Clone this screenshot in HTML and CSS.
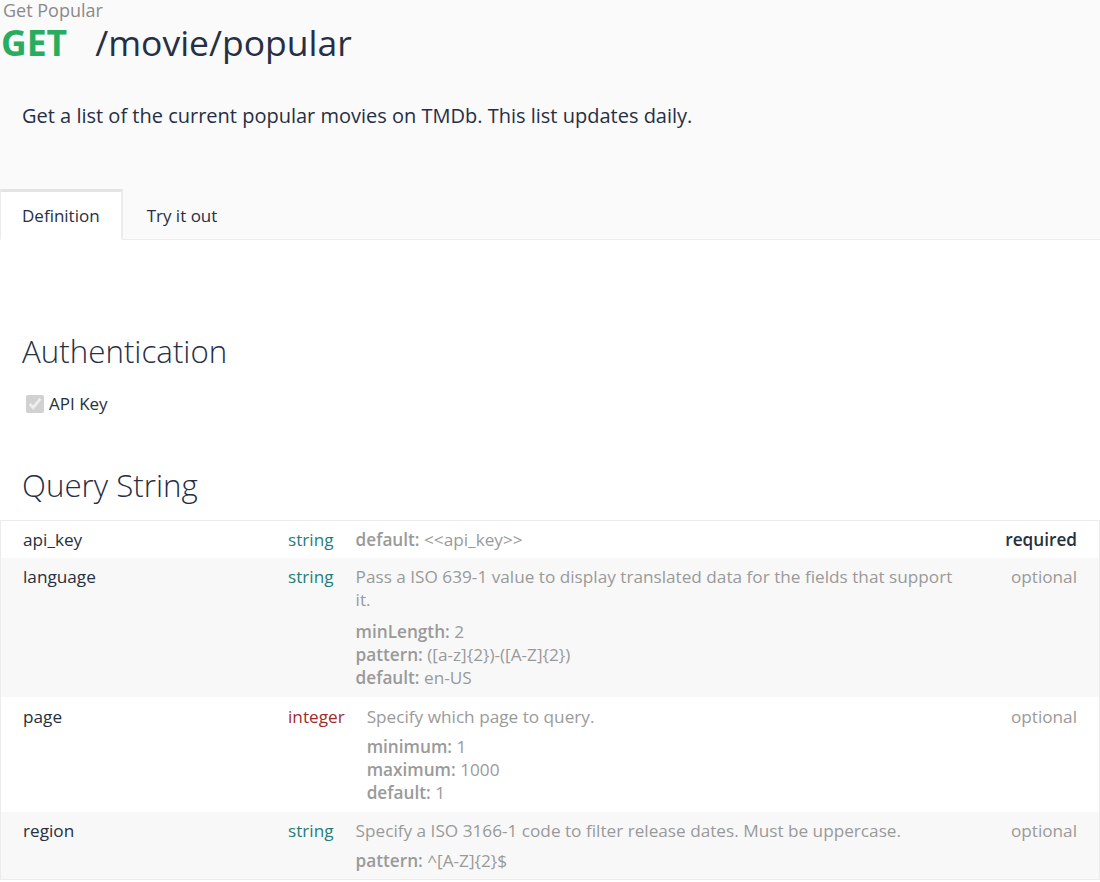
FILE: index.html
```html
<!DOCTYPE html>
<html lang="en">
<head>
<meta charset="utf-8">
<title>Get Popular</title>
<link rel="stylesheet" href="styles.css">
</head>
<body>
<header class="op-header">
  <div class="op-summary">Get Popular</div>
  <h1 class="op-title"><span class="op-method">GET</span><span class="op-path">/movie/popular</span></h1>
  <p class="op-desc">Get a list of the current popular movies on TMDb. This list updates daily.</p>
  <nav class="tabs">
    <div class="tab tab-active">Definition</div>
    <div class="tab">Try it out</div>
    <div class="tab-fill"></div>
  </nav>
</header>
<main class="content">
  <section class="auth">
    <h2 class="section-title">Authentication</h2>
    <label class="auth-item"><input type="checkbox" checked disabled class="auth-check"><span>API Key</span></label>
  </section>
  <section class="query">
    <h2 class="section-title">Query String</h2>
    <div class="params">
      <div class="param">
        <div class="param-name">api_key</div>
        <div class="param-main">
          <div class="param-type type-string">string</div>
          <div class="param-desc">
            <div class="constraints"><div><b>default:</b> &lt;&lt;api_key&gt;&gt;</div></div>
          </div>
        </div>
        <div class="param-req req-required">required</div>
      </div>
      <div class="param param-alt param-lang">
        <div class="param-name">language</div>
        <div class="param-main">
          <div class="param-type type-string">string</div>
          <div class="param-desc">
            <p class="desc-text">Pass a ISO 639-1 value to display translated data for the fields that support it.</p>
            <div class="constraints">
              <div><b>minLength:</b> 2</div>
              <div><b>pattern:</b> ([a-z]{2})-([A-Z]{2})</div>
              <div><b>default:</b> en-US</div>
            </div>
          </div>
        </div>
        <div class="param-req">optional</div>
      </div>
      <div class="param param-page">
        <div class="param-name">page</div>
        <div class="param-main">
          <div class="param-type type-integer">integer</div>
          <div class="param-desc">
            <p class="desc-text">Specify which page to query.</p>
            <div class="constraints">
              <div><b>minimum:</b> 1</div>
              <div><b>maximum:</b> 1000</div>
              <div><b>default:</b> 1</div>
            </div>
          </div>
        </div>
        <div class="param-req">optional</div>
      </div>
      <div class="param param-alt">
        <div class="param-name">region</div>
        <div class="param-main">
          <div class="param-type type-string">string</div>
          <div class="param-desc">
            <p class="desc-text">Specify a ISO 3166-1 code to filter release dates. Must be uppercase.</p>
            <div class="constraints">
              <div><b>pattern:</b> ^[A-Z]{2}$</div>
            </div>
          </div>
        </div>
        <div class="param-req">optional</div>
      </div>
    </div>
  </section>
</main>
</body>
</html>
```

FILE: styles.css
```css
* { box-sizing: border-box; }
html, body { margin: 0; padding: 0; }
body {
  font-family: "Open Sans", "Noto Sans", sans-serif;
  color: #263040;
  background: #ffffff;
  font-size: 17.2px;
  line-height: 23px;
}
.op-header {
  background: #fafafa;
}
.op-summary {
  padding-left: 3px;
  font-size: 18px;
  line-height: 21px;
  color: #8a8a8a;
}
.op-title {
  margin: 0;
  padding-left: 1px;
  font-size: 35.5px;
  line-height: 43px;
  font-weight: 400;
  display: flex;
  gap: 28px;
}
.op-method { color: #27ad5f; font-weight: 700; }
.op-path { color: #262f45; }
.op-desc {
  margin: 0;
  padding: 39px 22px 0;
  font-size: 20px;
  line-height: 26px;
  color: #262f45;
}
.tabs {
  display: flex;
  margin-top: 60px;
}
.tab {
  padding: 0 24px;
  height: 51px;
  line-height: 48px;
  border-top: 3px solid transparent;
  border-bottom: 1px solid #ececec;
  font-size: 17px;
  color: #262f45;
}
.tab-active {
  background: #ffffff;
  border-top-color: #e4e4e4;
  border-left: 1px solid #ececec;
  border-right: 2px solid #ececec;
  border-bottom-color: #ffffff;
  padding: 0 21px;
}
.tab-fill {
  flex: 1;
  border-bottom: 1px solid #ececec;
}
.content { padding-top: 89px; }
.section-title {
  margin: 0;
  padding-left: 22px;
  font-size: 31.3px;
  font-weight: 300;
  line-height: 44px;
  color: #262f45;
}
.auth-item {
  display: flex;
  align-items: center;
  gap: 5px;
  margin: 19px 0 0 24px;
  font-size: 17px;
}
.auth-check {
  width: 18px;
  height: 18px;
  margin: 0 0 0 2px;
  accent-color: #d6d6d6;
}
.query { margin-top: 48px; }
.params {
  margin-top: 13px;
  border: 1px solid #ececec;
}
.param {
  display: flex;
  padding: 7px 22px;
  background: #ffffff;
}
.param-alt { background: #f8f8f8; }
.param-lang { padding-bottom: 8px; }
.param-page { padding-top: 8px; padding-bottom: 8px; }
.param-name {
  width: 265px;
  flex: none;
  color: #263040;
}
.param-main {
  flex: 1;
  display: flex;
  gap: 22px;
  min-width: 0;
}
.param-type { flex: none; }
.type-string { color: #1f7f7c; }
.type-integer { color: #a32a2a; }
.param-desc {
  flex: 1;
  color: #9a9a9a;
  padding-right: 12px;
}
.desc-text { margin: 0 0 7px 0; }
.param-lang .desc-text { margin-bottom: 9px; }
.constraints b { font-weight: 600; }
.param-req {
  width: 100px;
  flex: none;
  text-align: right;
  color: #9a9a9a;
}
.req-required { color: #263040; font-weight: 600; }
```
